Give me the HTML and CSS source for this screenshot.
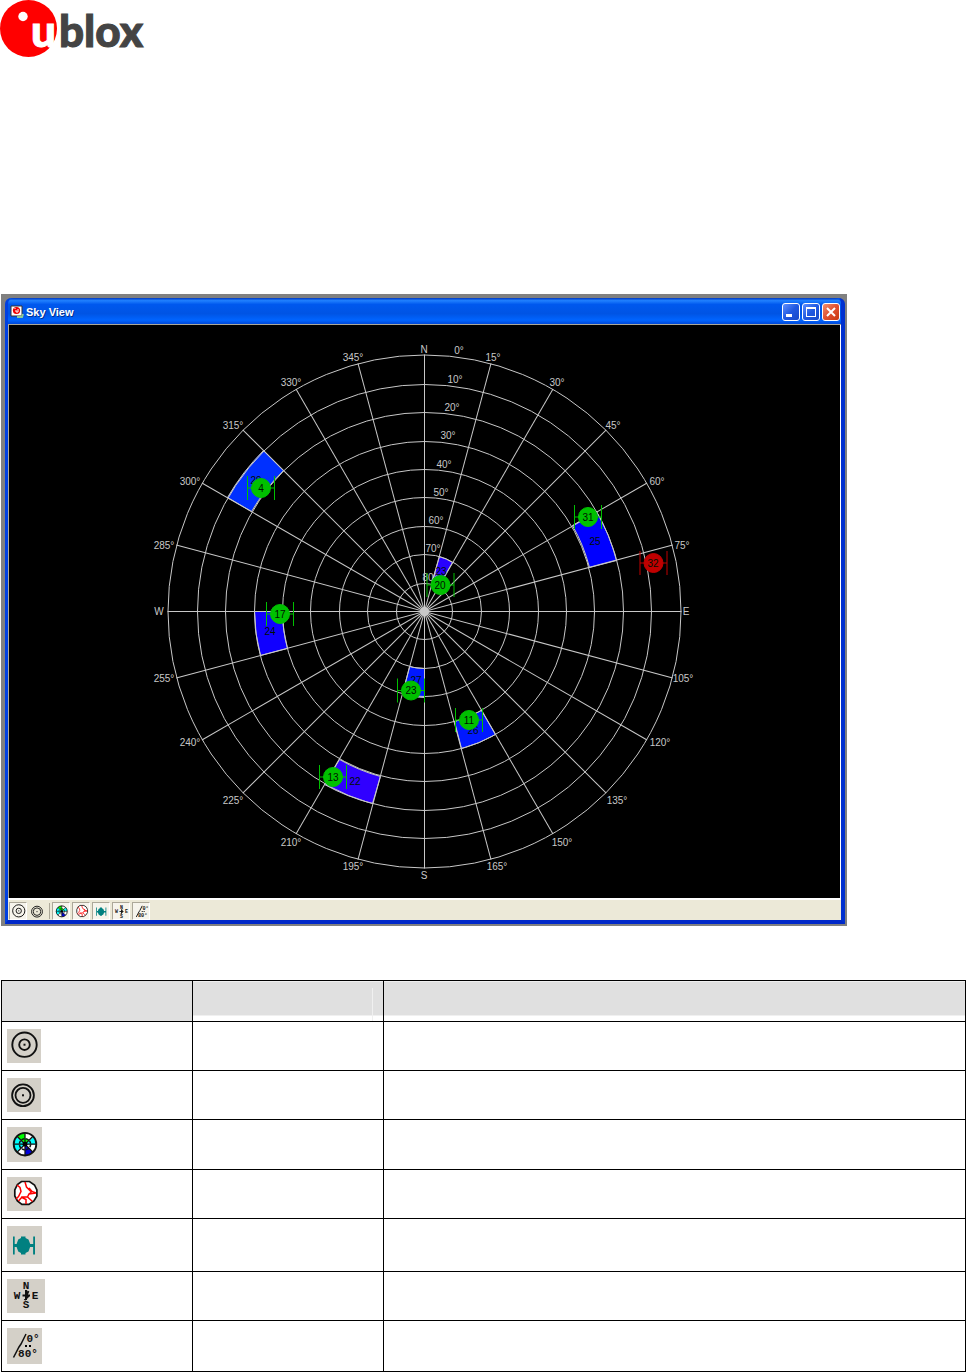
FILE: index.html
```html
<!DOCTYPE html>
<html lang="en">
<head>
<meta charset="utf-8">
<title>Sky View</title>
<link rel="stylesheet" href="styles.css">
</head>
<body>
<svg class="sprite" aria-hidden="true">
  <symbol id="i-rings" viewBox="0 0 34 34">
    <g fill="none" stroke="#111" stroke-width="1.9"><circle cx="17.5" cy="15.7" r="12.2"/><circle cx="17.5" cy="15.7" r="5.3"/></g>
    <rect x="16.5" y="14.7" width="2" height="2" fill="#111"/>
  </symbol>
  <symbol id="i-double" viewBox="0 0 34 34">
    <g fill="none" stroke="#111" stroke-width="1.8"><circle cx="16" cy="17.3" r="10.9"/><circle cx="16" cy="17.3" r="7.5"/></g>
    <rect x="15" y="16.3" width="2" height="2" fill="#111"/>
  </symbol>
  <symbol id="i-sectors" viewBox="0 0 35 34">
    <circle cx="18" cy="16.7" r="11.3" fill="#fff"/>
    <path fill="#0ff" d="M18 16.7 9 9a11 11 0 0 0 0 15.400zM18 16.7 27 9q3 4 2.200 7.700z"/>
    <path fill="#0f0" d="M18 16.7 10 9q3-4 8-3.600zM18 16.700V11l5 1z"/>
    <path fill="#00d" d="M18 16.700V28q5 0 7.800-3.500z"/>
    <circle cx="18" cy="16.7" r="11.3" fill="none" stroke="#111" stroke-width="1.8"/>
    <circle cx="18" cy="16.7" r="5.6" fill="none" stroke="#111" stroke-width="1.5" stroke-dasharray="3 1.400"/>
    <path d="M6.700 16.700h22.600M18 5.400v22.600M10 8.700l16 16M26 8.700l-16 16" stroke="#111" stroke-width="1.300"/>
    <circle cx="18" cy="16.700" r="2.400"/>
  </symbol>
  <symbol id="i-orbits" viewBox="0 0 35 34">
    <path d="M14.500 4.500h8l5 3.500 2.400 5v6l-3 5-5 3.400h-7l-4.500-3.400-2.600-5v-6l2.600-5.500z" fill="#fff" stroke="#111" stroke-width="1.700"/>
    <path d="M18 5l1.500 5 4 4 5.500 2M10 8l3 2.500 1 4-2.500 5-2.500 2.500M29 16l-7 1-1.500 3-5.500 0-3.500 4M20.500 20l5 4.500M14 20l5 2.500v4.500M22 11l3 3.500-3 2.500" fill="none" stroke="#f00" stroke-width="1.500"/>
  </symbol>
  <symbol id="i-sat" viewBox="0 0 35 37">
    <path d="M14 11.500V10h4.500v1.500l3 1.500 1.700 4.500h3V10H28v18h-1.900v-7.500h-3L21.500 25l-3 1.500V28H14v-1.500L11.200 25l-1.600-4.500H7.700V28H6V10h1.700v7.500h1.900l1.600-4.500z" fill="#008080"/>
  </symbol>
</svg>

<header class="brand">
  <svg class="logo" viewBox="0 0 150 58" role="img" aria-label="ublox">
    <circle cx="28.500" cy="28.500" r="28.500" fill="#f00"/>
    <circle cx="23" cy="16.500" r="4.700" fill="#fff"/>
    <text x="31" y="47" fill="#fff" stroke="#fff">u</text>
    <text x="59" y="47" fill="#444" stroke="#444">blox</text>
  </svg>
</header>

<main>
  <section class="shot">
    <div class="window">
      <div class="titlebar">
        <svg class="app" viewBox="0 0 14 14"><path d="M1 1h11v10H1z" fill="#fff" stroke="#333"/><circle cx="6.500" cy="5.500" r="3.600" fill="#e00"/><path d="M5 3v1M6 5v2h2V4" stroke="#fff" fill="none"/><path d="M7 12h5l1-3" stroke="#8c9" fill="none" stroke-width="2"/></svg>
        <h1 class="title">Sky View</h1>
        <button class="ctl" aria-label="Minimize"><svg viewBox="0 0 16 16"><path d="M3 10h6v3H3z" fill="#fff"/></svg></button>
        <button class="ctl" aria-label="Maximize"><svg viewBox="0 0 16 16"><path d="M3 3h10v10H3zM4 5v7h8V5z" fill="#fff" fill-rule="evenodd"/></svg></button>
        <button class="ctl close" aria-label="Close"><svg viewBox="0 0 16 16"><path d="M4 4l8 8M12 4l-8 8" stroke="#fff" stroke-width="2"/></svg></button>
      </div>
      <svg class="sky" viewBox="9 325 831 573">
        <g transform="translate(424.500 611.500)" class="fields">
          <path fill="#0030ff" d="M-161-161A228 228 0 0 0-197-114L-173-100A199 199 0 0 1-141-141z"/>
          <path fill="#1000ff" d="M-170 0A170 170 0 0 0-164 44L-137 37A142 142 0 0 1-142 0z"/>
          <path fill="#3000ff" d="M-85 148A171 171 0 0 0-44 165L-52 192A199 199 0 0 1-100 173z"/>
          <path fill="#0018ff" d="M0 57V86A86 86 0 0 1-22 83L-15 55A57 57 0 0 0 0 57z"/>
          <path fill="#0018ff" d="M57 99L71 123A142 142 0 0 1 37 137L30 110A114 114 0 0 0 57 99z"/>
          <path fill="#0000ff" d="M148-86L172-100A199 199 0 0 1 192-51L165-44A171 171 0 0 0 148-86z"/>
          <path fill="#2800ff" d="M15-55A57 57 0 0 1 28-49L14-25A28 28 0 0 0 7-28z"/>
        </g>
        <g transform="translate(424.500 611.500)" class="grid">
          <circle r="28"/><circle r="57"/><circle r="85"/><circle r="114"/><circle r="142"/><circle r="170"/><circle r="199"/><circle r="227"/><circle r="256.500"/>
          <path d="M0-257V257M-257 0H257"/>
          <path id="spoke" d="M0-257V257" transform="rotate(15)"/>
          <use href="#spoke" transform="rotate(15)"/><use href="#spoke" transform="rotate(30)"/><use href="#spoke" transform="rotate(45)"/><use href="#spoke" transform="rotate(60)"/><use href="#spoke" transform="rotate(90)"/><use href="#spoke" transform="rotate(105)"/><use href="#spoke" transform="rotate(120)"/><use href="#spoke" transform="rotate(135)"/><use href="#spoke" transform="rotate(150)"/>
          <circle r="4" class="hub"/>
        </g>
        <g class="lbl">
          <text x="424" y="353">N</text><text x="493" y="361">15°</text><text x="557" y="386">30°</text><text x="613" y="429">45°</text><text x="657" y="485">60°</text><text x="682" y="549">75°</text>
          <text x="686" y="615">E</text><text x="683" y="682">105°</text><text x="660" y="746">120°</text><text x="617" y="804">135°</text><text x="562" y="846">150°</text><text x="497" y="870">165°</text>
          <text x="424" y="879">S</text><text x="353" y="870">195°</text><text x="291" y="846">210°</text><text x="233" y="804">225°</text><text x="190" y="746">240°</text><text x="164" y="682">255°</text>
          <text x="159" y="615">W</text><text x="164" y="549">285°</text><text x="190" y="485">300°</text><text x="233" y="429">315°</text><text x="291" y="386">330°</text><text x="353" y="361">345°</text>
          <text x="459" y="354">0°</text><text x="455" y="383">10°</text><text x="452" y="411">20°</text><text x="448" y="439">30°</text><text x="444" y="468">40°</text><text x="441" y="496">50°</text><text x="436" y="524">60°</text><text x="433" y="552">70°</text><text x="430" y="581">80°</text>
        </g>
        <g class="lbl dark">
          <text x="256" y="484">29</text><text x="270" y="635">24</text><text x="355" y="785">22</text><text x="416" y="684">27</text><text x="473" y="734">26</text><text x="595" y="545">25</text><text x="441" y="575">23</text>
        </g>
        <defs><g id="sat"><path d="M-13.500-12V12M13.500-12V12M-13.500 0H13.500" fill="none"/><circle r="9.500"/></g></defs>
        <g class="good">
          <use href="#sat" x="261" y="488"/><use href="#sat" x="280" y="614"/><use href="#sat" x="333" y="777"/><use href="#sat" x="411" y="690.500"/><use href="#sat" x="469" y="720"/><use href="#sat" x="440.500" y="585"/><use href="#sat" x="588" y="517"/>
        </g>
        <g class="bad"><use href="#sat" x="653.500" y="563"/></g>
        <g class="lbl dark">
          <text x="261" y="492">4</text><text x="280" y="618">17</text><text x="333" y="781">13</text><text x="411" y="694">23</text><text x="469" y="724">11</text><text x="440" y="589">20</text><text x="588" y="521">31</text><text x="653" y="567">32</text>
        </g>
      </svg>
      <div class="toolbar">
        <button class="tool on" aria-label="Rings"><svg><use href="#i-rings"/></svg></button>
        <button class="tool" aria-label="Double rings"><svg><use href="#i-double"/></svg></button>
        <span class="sep"></span>
        <button class="tool on" aria-label="Sectors"><svg><use href="#i-sectors"/></svg></button>
        <button class="tool on" aria-label="Orbits"><svg><use href="#i-orbits"/></svg></button>
        <button class="tool on" aria-label="Satellites"><svg><use href="#i-sat"/></svg></button>
        <button class="tool on" aria-label="Compass"><svg viewBox="0 0 38 34">
          <g class="glyph"><text x="19" y="11">N</text><text x="8" y="21">W</text><text x="30" y="21">E</text><text x="19" y="31">S</text></g>
          <path d="M19 12v10M14.500 17h9M21.500 13l-2 4 2 1-4 4" fill="none" stroke="#111" stroke-width="2"/></svg></button>
        <button class="tool on" aria-label="Degrees"><svg viewBox="0 0 35 36">
          <path d="M6.500 29.500 12 19l2-3 5-10" fill="none" stroke="#111" stroke-width="2"/>
          <path d="M18 17h2v2h-2zM22 17h2v2h-2z"/>
          <g class="glyph"><text x="26" y="14">0°</text><text x="20" y="30">80°</text></g></svg></button>
      </div>
    </div>
  </section>

  <table class="legend">
    <colgroup><col class="narrow"><col class="narrow"><col></colgroup>
    <thead><tr><th></th><th class="part split"></th><th class="part"></th></tr></thead>
    <tbody>
      <tr><td><svg class="icon"><use href="#i-rings"/></svg></td><td></td><td></td></tr>
      <tr><td><svg class="icon"><use href="#i-double"/></svg></td><td></td><td></td></tr>
      <tr><td><svg class="icon mid"><use href="#i-sectors"/></svg></td><td></td><td></td></tr>
      <tr><td><svg class="icon even"><use href="#i-orbits"/></svg></td><td></td><td></td></tr>
      <tr><td><svg class="icon tall"><use href="#i-sat"/></svg></td><td></td><td></td></tr>
      <tr><td><svg class="icon wide" viewBox="0 0 38 34">
        <g class="glyph"><text x="19" y="10">N</text><text x="10" y="20">W</text><text x="28" y="20">E</text><text x="19" y="29">S</text></g>
        <path d="M19 11v10M15.500 16.500h7.500M21.500 12l-2 4 2 1-4 4" fill="none" stroke="#111" stroke-width="2"/></svg></td><td></td><td></td></tr>
      <tr><td><svg class="icon high" viewBox="0 0 35 36">
        <path d="M6.500 29.500 12 19l2-3 5-10" fill="none" stroke="#111" stroke-width="1.500"/>
        <path d="M18 17h2v2h-2zM22 17h2v2h-2z"/>
        <g class="glyph"><text x="26" y="14">0°</text><text x="21" y="29">80°</text></g></svg></td><td></td><td></td></tr>
    </tbody>
  </table>
</main>
</body>
</html>
```

FILE: styles.css
```css
* { box-sizing: border-box; }
body { margin: 0; background: #fff; font-family: "Liberation Sans", Arial, sans-serif; }
svg { display: block; }
.sprite { position: absolute; width: 0; height: 0; }

.brand { padding-bottom: 236px; }
.logo { width: 150px; height: 58px; }
.logo text { font: 900 44px Lato, "Liberation Sans", sans-serif; stroke-width: 1; }

.shot { max-width: 846px; margin-left: 1px; padding: 4px 2px 2px 4px; background: #808080; }
.window {
  border: solid #0040e0;
  border-width: 0 4px 4px 3px;
  border-right-color: #0030d0;
  border-bottom-color: #0028c8;
  border-radius: 6px 6px 0 0;
  background: #0050e8;
}
.titlebar {
  display: flex;
  align-items: center;
  gap: 2px;
  height: 27px;
  padding: 2px 1px 0 2px;
  border-bottom: 1px solid #aca899;
  border-radius: 6px 6px 0 0;
  background: linear-gradient(#0038c0, #2080ff 10%, #0058ee 25%, #0054e4 60%, #0064ff 85%, #0048d8);
}
.app { width: 14px; height: 14px; }
.title { flex: 1; margin: 0; color: #fff; font-size: 11px; line-height: 14px; text-shadow: 1px 1px #003090; }
.ctl { width: 18px; height: 18px; padding: 0; border: 1px solid #fff; border-radius: 3px; background: linear-gradient(135deg, #6090ff, #2058e0 50%, #1848c8); }
.ctl svg { width: 16px; height: 16px; }
.close { background: linear-gradient(135deg, #f09070, #e05030 50%, #c83810); }

.sky { width: 100%; height: auto; background: #000; border-left: 1px solid #aca899; border-right: 1px solid #fff; }
.fields, .grid { stroke: #c8c8c8; stroke-width: 1; }
.grid { fill: none; }
.grid .hub { fill: #c8c8c8; }
.lbl { fill: #c8c8c8; font-size: 10px; text-anchor: middle; }
.dark { fill: #001000; }
.good { fill: #00c000; stroke: #00c000; }
.bad { fill: #c00000; stroke: #c00000; }

.toolbar { display: flex; align-items: center; gap: 2px; height: 22px; padding: 2px 1px 0 1px; border-top: 2px solid #fff; background: #ece9d8; }
.tool { width: 18px; height: 18px; padding: 0; border: 0; background: none; }
.tool.on { border: 1px solid; border-color: #aca899 #fff #fff #aca899; background: #f6f4ec; }
.tool svg { width: 17px; height: 17px; }
.sep { width: 1px; height: 16px; background: #aca899; }

.legend { width: calc(100% - 1px); margin: 54px 0 0 1px; border-collapse: collapse; table-layout: fixed; }
.legend th, .legend td { border: 1px solid #000; padding: 7px 5px; }
.legend th { height: 41px; background: #e0e0e0; }
.legend .part { background: linear-gradient(#e0e0e0 34px, #fff 34px); }
.legend .split { background: linear-gradient(90deg, transparent calc(100% - 11px), #f0f0f0 calc(100% - 11px), #f0f0f0 calc(100% - 10px), transparent calc(100% - 10px)) 0 7px no-repeat, linear-gradient(#e0e0e0 34px, #fff 34px); }
.narrow { width: 191px; }
.icon { width: 34px; height: 34px; background: #d4d0c8; }
.icon.mid { width: 35px; height: 35px; }
.icon.even { width: 35px; }
.icon.tall { width: 35px; height: 38px; }
.icon.wide { width: 38px; }
.icon.high { width: 35px; height: 36px; }
.glyph { font: 700 11px "Liberation Mono", monospace; text-anchor: middle; fill: #111; }
```
